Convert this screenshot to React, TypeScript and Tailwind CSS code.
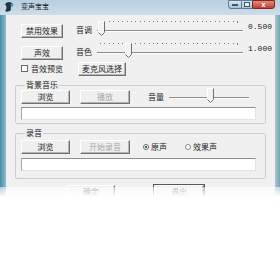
import React from "react";

const font = { fontFamily: '"Noto Sans CJK SC", "Noto Sans", sans-serif' };

const Btn = ({
  label,
  w,
  disabled,
  main,
  className = "",
}: {
  label: string;
  w: string;
  disabled?: boolean;
  main?: boolean;
  className?: string;
}) => (
  <div
    className={`${w} h-[14px] flex items-center justify-center bg-[#efefef] border border-t-white border-l-white border-r-[#707070] border-b-[#707070] shadow-[inset_-1px_-1px_0_#b4b4b4] text-[8px] leading-[8px] ${
      disabled ? "text-[#a8a8a8]" : "text-[#1a1a1a]"
    } ${main ? "outline outline-1 outline-[#555]" : ""} ${className}`}
  >
    {label}
  </div>
);

const Slider = ({ w, pos, ticks }: { w: number; pos: number; ticks?: boolean }) => {
  const dots = Array.from({ length: 32 }, (_, i) => 3 + (i * (w - 9)) / 31);
  return (
    <svg width={w} height={18} className="block shrink-0">
      {ticks &&
        dots.map((x, i) => (
          <rect key={i} x={Math.round(x)} y={1} width={1} height={i === 31 ? 2 : 1} fill="#7a7a7a" />
        ))}
      <line x1={0} y1={10.5} x2={w} y2={10.5} stroke="#8c8c8c" />
      <line x1={0} y1={11.5} x2={w} y2={11.5} stroke="#ffffff" />
      <path
        d={`M${pos + 0.5},1.5 V12.5 L${pos + 3.5},15.5 L${pos + 6.5},12.5 V1.5 Z`}
        fill="#f2f2f2"
        stroke="#ffffff"
      />
      <path
        d={`M${pos + 6.5},1.5 V12.5 L${pos + 3.5},15.5 L${pos + 0.5},12.5`}
        fill="none"
        stroke="#6e6e6e"
      />
    </svg>
  );
};

const Field = () => (
  <div className="w-[235px] h-[13px] bg-white border border-t-[#8e8f8f] border-l-[#a6a6a6] border-r-[#e3e3e3] border-b-[#e3e3e3]" />
);

export default function App() {
  return (
    <div className="relative w-[280px] h-[270px] overflow-hidden bg-white" style={font}>
      <div className="flex flex-col h-[230px]">
        {/* title bar */}
        <div className="h-[15px] flex items-start bg-gradient-to-b from-[#b7cfe0] to-[#cddde9]">
          <svg width={12} height={13} className="ml-[3px] mt-[1px]">
            <path d="M2 3 Q6 -1 10 3 Q7 5 8 9 Q5 12 2 10 Q5 7 2 3 Z" fill="#203648" />
            <circle cx={9} cy={4} r={1.5} fill="#5d8fb0" />
          </svg>
          <span className="ml-[6px] mt-[2px] text-[7px] leading-[9px] text-[#1c2630]">变声宝宝</span>
          <div className="ml-auto mr-[5px] flex h-[9px]">
            <div className="w-[14px] h-full border border-[#5f7a90] rounded-bl-[3px] bg-gradient-to-b from-[#dbe6ef] to-[#a9c0d2] flex items-end justify-center pb-[2px]">
              <div className="w-[6px] h-[2px] bg-white border border-[#40566a]" />
            </div>
            <div className="w-[10px] h-full border-y border-[#5f7a90] bg-gradient-to-b from-[#dbe6ef] to-[#a9c0d2] flex items-center justify-center">
              <div className="w-[6px] h-[5px] border border-[#40566a] bg-white/60" />
            </div>
            <div className="w-[23px] h-full border border-[#7a2a22] rounded-br-[3px] bg-gradient-to-b from-[#e48a7c] to-[#c4392b] flex items-center justify-center text-white text-[7px] leading-[7px] font-bold">
              x
            </div>
          </div>
        </div>

        <div className="flex flex-1">
          <div className="w-[6px] bg-gradient-to-r from-[#4b8da2] to-[#8fbdcb]" />

          {/* client area */}
          <div className="w-[269px] bg-[#f0f0f0] flex flex-col text-[8px] leading-[8px] text-[#1a1a1a]">
            {/* row 1 */}
            <div className="mt-[5px] h-[18px] flex items-start pl-[15px]">
              <Btn label="禁用效果" w="w-[42px]" className="mt-[4px]" />
              <span className="ml-[13px] mt-[6px]">音调</span>
              <div className="ml-[5px]">
                <Slider w={146} pos={1} ticks />
              </div>
              <span className="ml-[5px] mt-[3px]" style={{ fontFamily: '"Liberation Mono", monospace' }}>
                0.500
              </span>
            </div>

            {/* row 2 */}
            <div className="mt-[4px] h-[18px] flex items-start pl-[15px]">
              <Btn label="声效" w="w-[42px]" className="mt-[4px]" />
              <span className="ml-[13px] mt-[6px]">音色</span>
              <div className="ml-[5px]">
                <Slider w={146} pos={28} ticks />
              </div>
              <span className="ml-[5px] mt-[3px]" style={{ fontFamily: '"Liberation Mono", monospace' }}>
                1.000
              </span>
            </div>

            {/* row 3 */}
            <div className="mt-[1px] h-[15px] flex items-center pl-[15px]">
              <div className="w-[7px] h-[7px] bg-white border border-[#6b6b6b]" />
              <span className="ml-[3px]">音效预览</span>
              <Btn label="麦克风选择" w="w-[48px]" className="ml-[15px]" />
            </div>

            {/* background music */}
            <fieldset className="mt-[4px] ml-[9px] w-[251px] border border-[#c9ced2] rounded-[2px] pl-[5px] pb-[3px]">
              <legend className="ml-[4px] px-[1px] leading-[10px]">背景音乐</legend>
              <div className="flex items-center h-[14px]">
                <Btn label="浏览" w="w-[49px]" />
                <Btn label="播放" w="w-[50px]" disabled className="ml-[10px]" />
                <span className="ml-[18px]">音量</span>
                <div className="ml-[5px] -mt-[3px]">
                  <Slider w={80} pos={38} />
                </div>
              </div>
              <div className="mt-[3px]">
                <Field />
              </div>
            </fieldset>

            {/* recording */}
            <fieldset className="mt-[4px] ml-[9px] w-[251px] border border-[#c9ced2] rounded-[2px] pl-[5px] pb-[7px]">
              <legend className="ml-[4px] px-[1px] leading-[10px]">录音</legend>
              <div className="mt-[2px] flex items-center h-[14px]">
                <Btn label="浏览" w="w-[49px]" />
                <Btn label="开始录音" w="w-[50px]" disabled className="ml-[10px]" />
                <div className="ml-[13px] w-[6px] h-[6px] rounded-full bg-white border border-[#6b6b6b] flex items-center justify-center">
                  <div className="w-[2px] h-[2px] rounded-full bg-[#222]" />
                </div>
                <span className="ml-[2px]">原声</span>
                <div className="ml-[18px] w-[6px] h-[6px] rounded-full bg-white border border-[#8a8a8a]" />
                <span className="ml-[2px]">效果声</span>
              </div>
              <div className="mt-[4px]">
                <Field />
              </div>
            </fieldset>

            {/* bottom buttons */}
            <div className="mt-[6px] flex pl-[61px]">
              <Btn label="确定" w="w-[48px]" />
              <Btn label="退出" w="w-[50px]" main className="ml-[39px]" />
            </div>
          </div>

          <div className="w-[5px] bg-gradient-to-r from-[#a9c6d0] to-[#6fa6b8]" />
        </div>
      </div>

      {/* faded lower part of the screenshot */}
      <div className="absolute left-0 right-0 top-[187px] bottom-0 bg-[linear-gradient(to_bottom,rgba(255,255,255,0.55),#ffffff_10px)]" />
    </div>
  );
}
